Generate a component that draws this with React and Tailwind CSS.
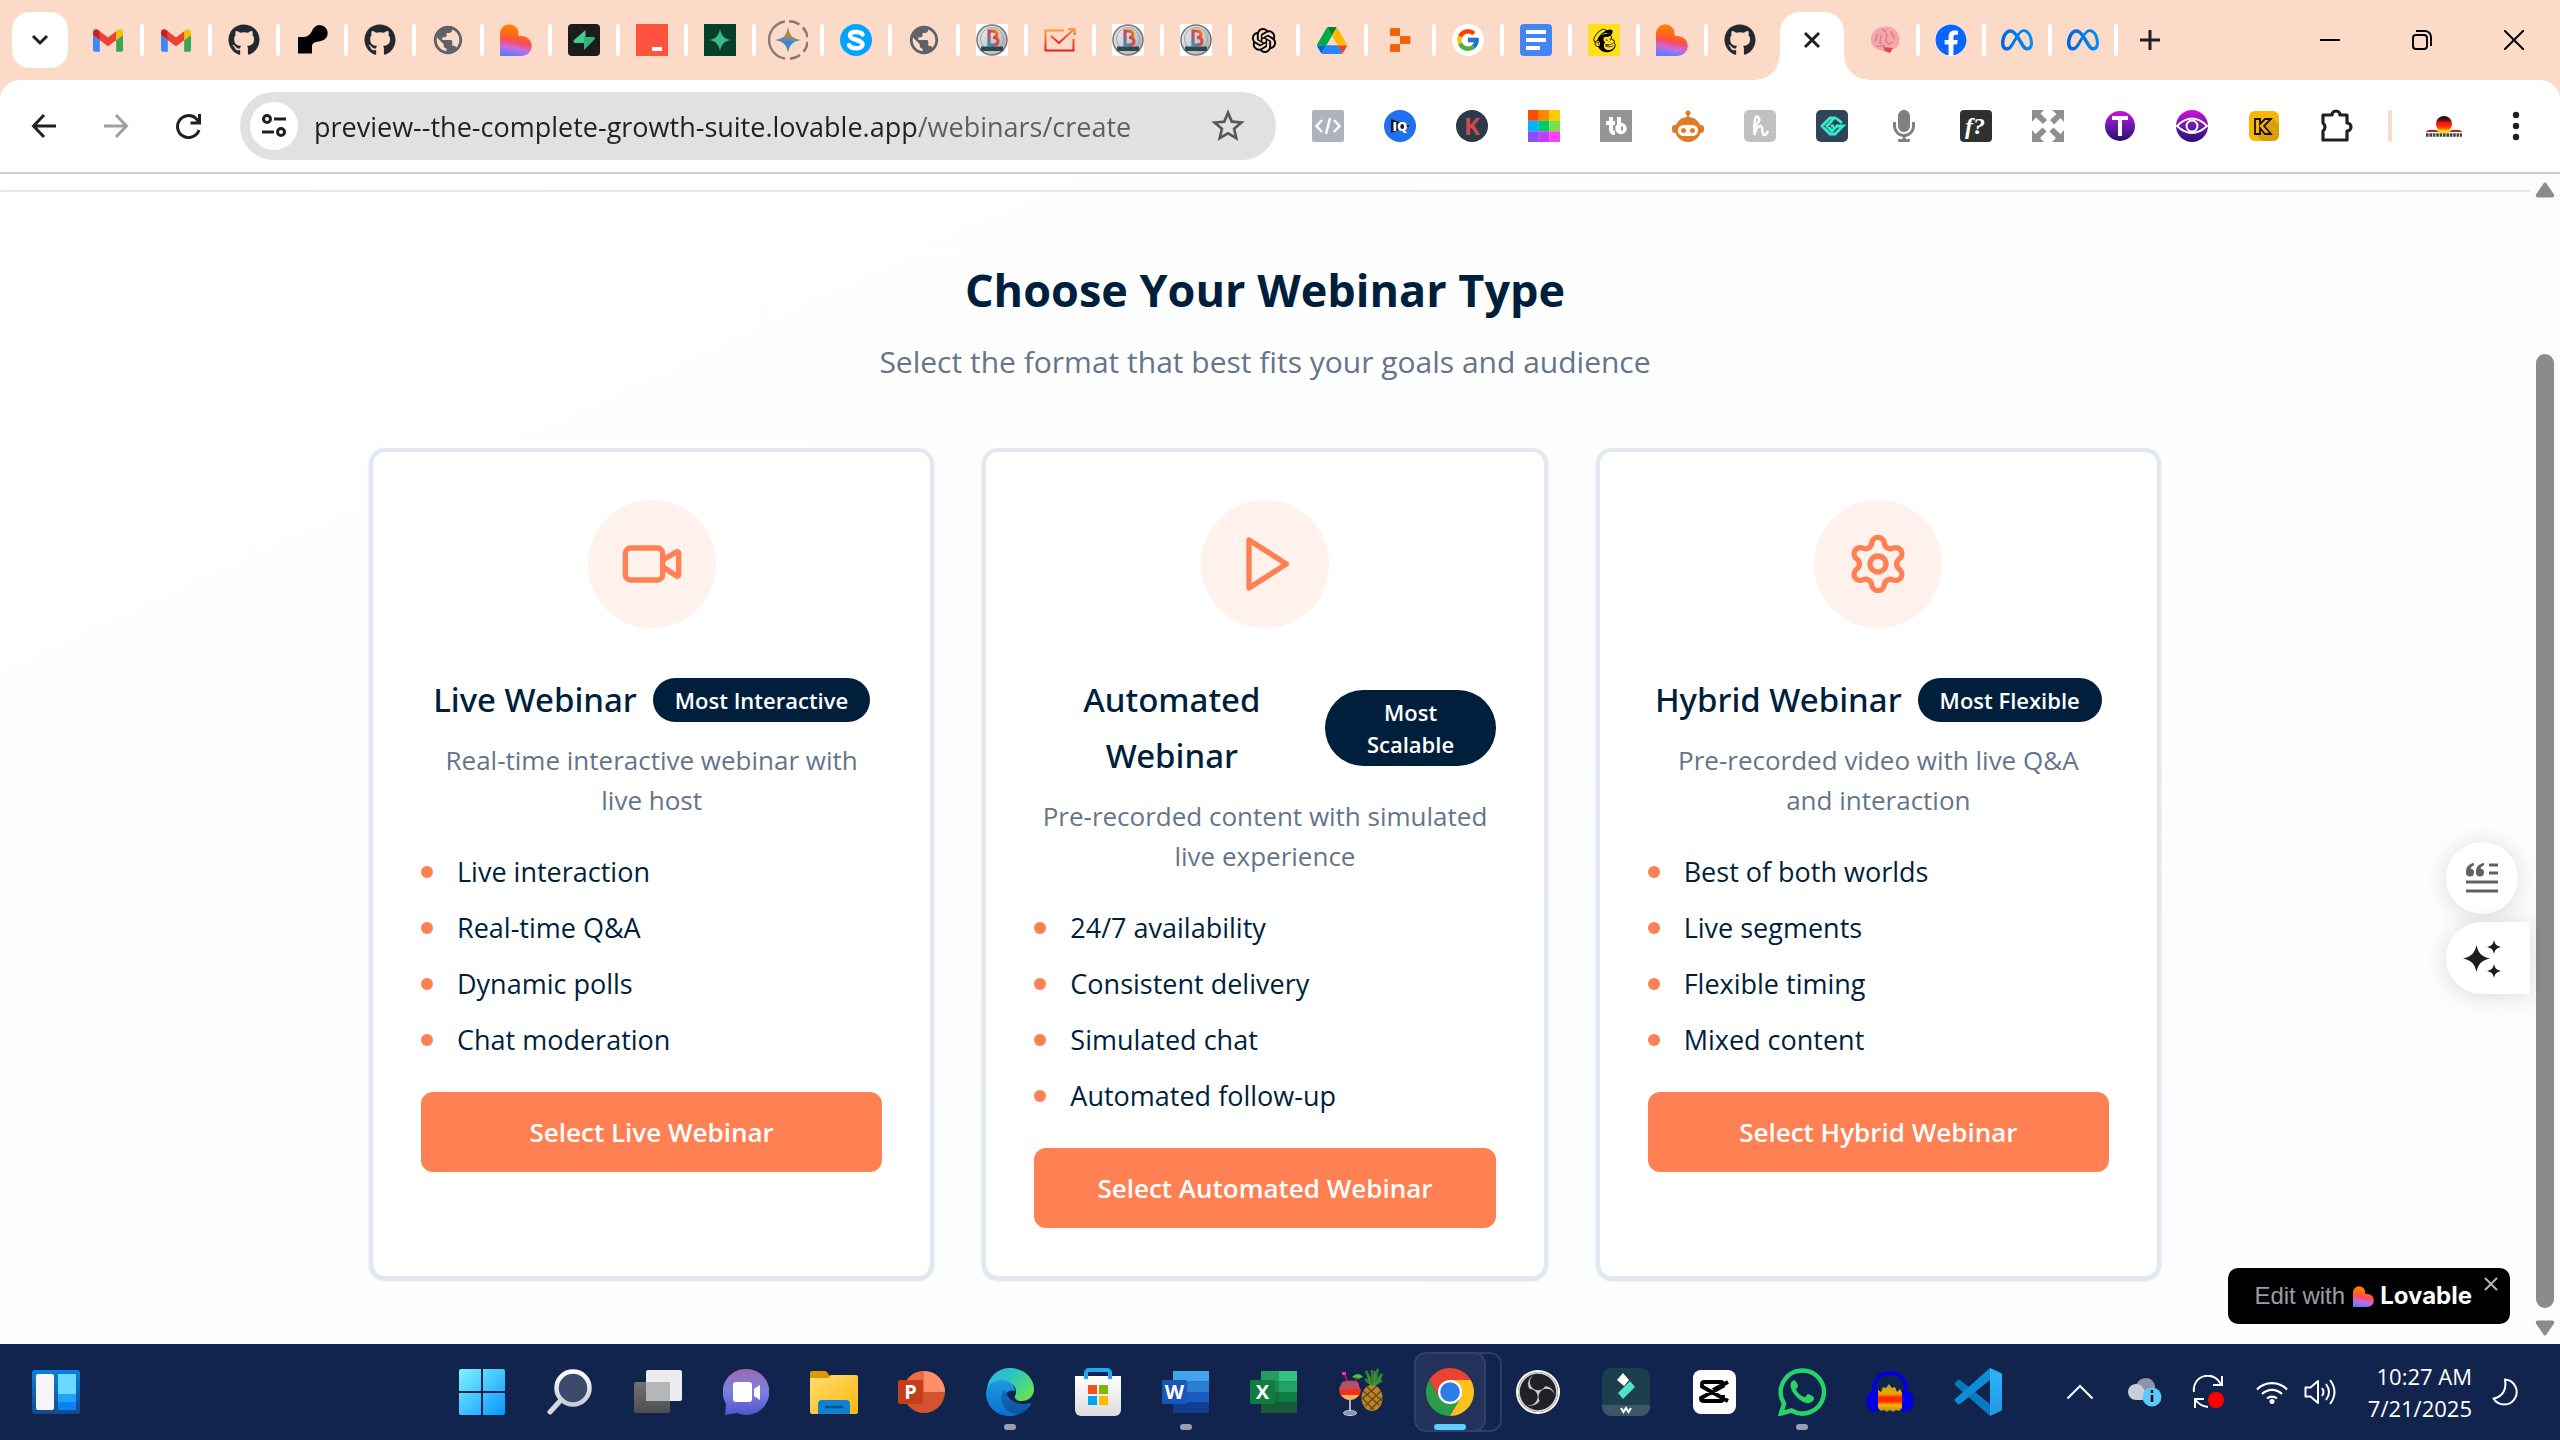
import React from "react";
import { Video, Settings } from "lucide-react";
import { FaGithub, FaFacebook, FaMailchimp, FaMicrophone } from "react-icons/fa";
import { FaMeta } from "react-icons/fa6";
import { FcGoogle } from "react-icons/fc";
import { MdPublic, MdStarOutline } from "react-icons/md";
import { AiOutlineOpenAI } from "react-icons/ai";
import { SiObsstudio } from "react-icons/si";

/* ---------- shared gradients ---------- */
function Gradients() {
  const g = (id, stops, v = [0, 0, 0, 1]) => (
    <linearGradient id={id} x1={v[0]} y1={v[1]} x2={v[2]} y2={v[3]}>
      {stops.map(([o, c]) => <stop key={o} offset={o} stopColor={c} />)}
    </linearGradient>
  );
  return (
    <svg width="0" height="0" className="absolute" aria-hidden="true">
      <defs>
        {g("heart", [[0, "#ff8a00"], [0.35, "#ff6a10"], [0.55, "#ff4a58"], [0.75, "#c86ae0"], [1, "#5a7dff"]], [0.6, 0, 0.4, 1])}
        {g("win", [[0, "#7ff3ff"], [1, "#0a95ff"]], [0, 0, 1, 1])}
        {g("widget", [[0, "#0a7fe0"], [1, "#144a8c"]])}
        {g("folder", [[0, "#ffdc70"], [1, "#fbb90e"]], [0, 0, 1, 1])}
        {g("chat", [[0, "#9a6bb5"], [0.5, "#7a80e0"], [1, "#5254c8"]])}
        {g("edgeA", [[0, "#2fb0f5"], [0.5, "#2cc6c0"], [1, "#62e05a"]], [0, 0, 1, 0.6])}
        {g("edgeB", [[0, "#1b9de0"], [1, "#0a6ed0"]])}
        {g("edgeC", [[0, "#0f6ab8"], [1, "#1054a0"]])}
        {g("purple", [[0, "#d010d8"], [0.5, "#6a1ab0"], [1, "#2a0f6a"]])}
        {g("meta", [[0, "#0064e0"], [1, "#0090fb"]], [0, 0, 1, 0])}
        {g("check", [[0, "#ff9a3c"], [1, "#f01c1c"]])}
        {g("bag", [[0, "#ffffff"], [1, "#dcdcde"]])}
        {g("lens", [[0, "#ffffff"], [1, "#c8ccd4"]])}
        {g("gray", [[0, "#707274"], [1, "#4c4e50"]])}
        {g("wave", [[0, "#c9a21a"], [0.35, "#e8a800"], [0.48, "#ff2a00"], [0.62, "#ff2a00"], [0.75, "#ffb400"], [1, "#a88a20"]])}
        {g("gem", [[0, "#e8453c"], [0.35, "#9a9a50"], [0.6, "#3b7df0"], [1, "#34a853"]], [0.5, 0, 0.4, 1])}
        {g("flag", [[0, "#111111"], [0.25, "#501010"], [0.4, "#f01010"], [0.7, "#ff3a00"], [1, "#ffe000"]])}
        {g("disc", [[0, "#f4f4f6"], [1, "#a8aab0"]], [0, 0, 1, 1])}
        {g("bletter", [[0, "#e0a020"], [0.3, "#e0502c"], [0.6, "#c04a70"], [1, "#2a9ab0"]], [1, 0, 0, 1])}
        {g("vs", [[0, "#2fb4f8"], [1, "#1f98e8"]])}
      </defs>
    </svg>
  );
}

const Svg = ({ w = 32, h = 32, vb = "0 0 32 32", children }) => (
  <svg width={w} height={h} viewBox={vb} fill="none" aria-hidden="true" className="shrink-0">{children}</svg>
);

/* ---------- favicons ---------- */
const Gmail = () => (
  <Svg w={30} h={23} vb="52 42 88 66">
    <path fill="#4285f4" d="M58 108h14V74L52 59v43c0 3.32 2.69 6 6 6" />
    <path fill="#34a853" d="M120 108h14c3.32 0 6-2.69 6-6V59l-20 15" />
    <path fill="#fbbc04" d="M120 48v26l20-15v-8c0-7.42-8.47-11.65-14.4-7.2" />
    <path fill="#ea4335" d="M72 74V48l24 18 24-18v26L96 92" />
    <path fill="#c5221f" d="M52 51v8l20 15V48l-5.6-4.2c-5.94-4.45-14.4-.22-14.4 7.2" />
  </Svg>
);
const Github = () => <FaGithub className="size-8 text-[#24292f]" />;
const Globe = () => <MdPublic className="size-[34px] text-[#5f6368]" />;
const Heart = ({ size = 32 }) => (
  <Svg w={size} h={size}>
    <path fill="url(#heart)" d="M0 32V9.5a9.3 9.3 0 0 1 18.6 0V12h3.2a10 10 0 0 1 0 20z" />
  </Svg>
);
const BlackMark = () => (
  <Svg>
    <path fill="#000" d="M2 29.500V13h5c4 0 7-2 9-6a8 8 0 1 1 9 10c-6 1-9 2-9 5v7.500z" />
  </Svg>
);
const Bolt = () => (
  <Svg>
    <rect width="32" height="32" rx="4" fill="#1c1c1c" />
    <path fill="#3ecf8e" d="M17.500 6v13H7.500c-2 0-2.600-1.500-1.500-3z" />
    <path fill="#34b27b" d="M16 26V13h9.500c1.500 0 1.800 1.500.8 2.800z" />
  </Svg>
);
const RedSquare = () => (
  <Svg><rect width="32" height="32" fill="#ff5340" /><rect x="16" y="23" width="10" height="4" fill="#fff" /></Svg>
);
const GreenStar = () => (
  <Svg>
    <rect width="32" height="32" fill="#063f2c" />
    <path fill="#3cb98a" d="M16 5c1.500 7 4 9.500 11 11-7 1.500-9.500 4-11 11-1.500-7-4-9.500-11-11 7-1.500 9.500-4 11-11z" />
  </Svg>
);
const Gemini = () => (
  <Svg w={40} h={40} vb="0 0 40 40">
    <path d="M17 38.500A18.700 18.700 0 0 1 17 1.500" stroke="#8d7a76" strokeWidth="2.500" />
    <path d="M21 1.300A18.700 18.700 0 0 1 21 38.700" stroke="#8d7a76" strokeWidth="2.500" strokeDasharray="11 4.500" />
    <path fill="url(#gem)" d="M20 7c1.500 8.500 4.500 11.500 13 13-8.500 1.500-11.500 4.500-13 13-1.500-8.500-4.500-11.500-13-13 8.500-1.500 11.500-4.500 13-13z" />
  </Svg>
);
const Skype = () => (
  <Svg>
    <circle cx="16" cy="16" r="16" fill="#00a3ff" />
    <path d="M22.500 10.500C21 7.500 10 6.500 10 11.500c0 5 12.500 3.500 12.500 9 0 5-11.500 5-13.500.5" stroke="#fff" strokeWidth="4.500" strokeLinecap="round" />
  </Svg>
);
const BDisc = () => (
  <Svg>
    <rect width="32" height="32" fill="#fff" />
    <circle cx="16" cy="16" r="15" fill="url(#disc)" stroke="#777" strokeWidth="1.500" />
    <circle cx="16" cy="15" r="11.500" stroke="#9c9ea4" />
    <path d="M13 21V7h4q4 0 4 3.300T17 13.500q5 0 5 3.700T17 21h-4z" stroke="url(#bletter)" strokeWidth="3.200" />
    <rect x="5" y="22.500" width="22" height="4.500" fill="#2c4654" />
  </Svg>
);
const CheckBox = () => (
  <Svg>
    <path d="M20 6.500H1.500v20h28V15" stroke="url(#check)" strokeWidth="2" />
    <path d="M7 12l8 7L30 5M24 5h6.500v6" stroke="url(#check)" strokeWidth="2" />
  </Svg>
);
const Drive = () => (
  <Svg w={30} h={27} vb="0 0 87.3 78">
    <path d="m6.600 66.850 3.850 6.650c.8 1.400 1.950 2.500 3.300 3.300l13.750-23.800h-27.500c0 1.550.4 3.100 1.200 4.500z" fill="#0066da" />
    <path d="m43.650 25-13.750-23.800c-1.350.8-2.500 1.900-3.300 3.300l-25.400 44a9.060 9.060 0 0 0-1.200 4.500h27.500z" fill="#00ac47" />
    <path d="m73.550 76.800c1.350-.8 2.500-1.900 3.300-3.300l1.600-2.750 7.650-13.250c.8-1.400 1.200-2.950 1.200-4.500h-27.500l5.850 11.500z" fill="#ea4335" />
    <path d="m43.650 25 13.750-23.800c-1.350-.8-2.900-1.200-4.500-1.200h-18.500c-1.600 0-3.150.45-4.500 1.200z" fill="#00832d" />
    <path d="m59.800 53h-32.300l-13.750 23.800c1.350.8 2.900 1.200 4.500 1.200h50.800c1.600 0 3.150-.45 4.500-1.200z" fill="#2684fc" />
    <path d="m73.400 26.500-12.700-22c-.8-1.400-1.950-2.500-3.300-3.300l-13.750 23.800 16.150 28h27.450c0-1.550-.4-3.100-1.200-4.500z" fill="#ffba00" />
  </Svg>
);
const Blocks = () => (
  <Svg><path fill="#f26207" d="M6 5.500a1.500 1.500 0 0 1 1.500-1.500H15a1 1 0 0 1 1 1v7H7.500A1.500 1.500 0 0 1 6 10.500zM16 12h9a1.500 1.500 0 0 1 1.500 1.500v5A1.500 1.500 0 0 1 25 20h-9zM6 21.500A1.500 1.500 0 0 1 7.500 20H16v7a1 1 0 0 1-1 1H7.500A1.500 1.500 0 0 1 6 26.500z" /></Svg>
);
const Google = () => (
  <span className="flex size-8 items-center justify-center rounded-full bg-white"><FcGoogle className="size-[26px]" /></span>
);
const Docs = () => (
  <Svg><rect width="32" height="32" rx="4" fill="#4285f4" /><path stroke="#fff" strokeWidth="4" d="M6 8h20M6 16h20M6 24h14" /></Svg>
);
const Mailchimp = () => (
  <span className="flex size-8 items-center justify-center bg-[#ffe01b]"><FaMailchimp className="size-[27px] text-black" /></span>
);
const Brain = () => (
  <Svg>
    <path fill="#f4a6ab" d="M3 20C0 14 3 6 11 3.500c8-2.500 15 0 18 6 3 7 1 13-3 15l-4 .5-3 4-5-2C9 26 5 24 3 20z" />
    <path fill="#d84a55" d="M14 23l10 1-3 5-5-2z" />
    <path stroke="#e07a84" strokeWidth="1.500" d="M6 17c2-3 1-5 3-7M11 20c1-4-1-6 2-9M16 9c3 1 2 4 1 6s1 4 3 5M22 7c0 4 4 3 3 8M8 22c3 1 5-1 8 0M24 18c-2 0-3 2-5 2M13 5c1 2 3 1 4 3" />
  </Svg>
);
const Facebook = () => (
  <span className="flex size-8 items-center justify-center rounded-full bg-white"><FaFacebook className="size-8 text-[#0866ff]" /></span>
);
const Meta = () => <FaMeta className="size-8" style={{ fill: "url(#meta)" }} />;
const ChatGpt = () => <AiOutlineOpenAI className="size-8 text-black" />;

const leftTabs = [
  ["Inbox", Gmail], ["Mail", Gmail], ["Repository", Github], ["Studio", BlackMark], ["Repository", Github],
  ["Web page", Globe], ["Lovable", Heart], ["Database", Bolt], ["Notes", RedSquare], ["Spark", GreenStar],
  ["Gemini", Gemini], ["Skype", Skype], ["Web page", Globe], ["Site", BDisc], ["Tasks", CheckBox],
  ["Site", BDisc], ["Site", BDisc], ["ChatGPT", ChatGpt], ["Drive", Drive], ["Replit", Blocks],
  ["Google", Google], ["Docs", Docs], ["Mailchimp", Mailchimp], ["Lovable", Heart], ["Repository", Github],
];
const rightTabs = [["Brain", Brain], ["Facebook", Facebook], ["Meta", Meta], ["Meta", Meta]];

function Tab({ label, Icon, last, width }) {
  return (
    <button aria-label={label} className={`mb-3 flex h-14 shrink-0 items-center ${width}`}>
      <span className="flex flex-1 items-center justify-center"><Icon /></span>
      <span className={`h-8 w-1 rounded-sm ${last ? "" : "bg-white"}`} />
    </button>
  );
}

function TabStrip() {
  return (
    <header className="flex h-20 items-end bg-[#fcdac8] pl-3">
      <button aria-label="Search tabs" className="mb-3 flex h-14 w-14 shrink-0 items-center justify-center rounded-[18px] bg-white">
        <Svg w={20} h={20} vb="0 0 20 20"><path d="M3 6l7 7 7-7" stroke="#1f2023" strokeWidth="3" /></Svg>
      </button>
      <nav aria-label="Tabs" className="ml-2 flex">
        {leftTabs.map(([label, Icon], i) => (
          <Tab key={i} label={label} Icon={Icon} last={i === leftTabs.length - 1} width="w-[68px]" />
        ))}
        <div className="relative mr-[10px] ml-1 flex h-17 w-16 items-center justify-center rounded-t-[20px] bg-white pb-3">
          <button aria-label="Close tab">
            <Svg w={20} h={20} vb="0 0 20 20"><path d="M3 3l14 14M17 3L3 17" stroke="#1f2023" strokeWidth="3" /></Svg>
          </button>
          <span className="absolute bottom-0 -left-6 size-6 bg-[radial-gradient(circle_at_0_0,transparent_23px,white_24px)]" />
          <span className="absolute -right-6 bottom-0 size-6 bg-[radial-gradient(circle_at_100%_0,transparent_23px,white_24px)]" />
        </div>
        {rightTabs.map(([label, Icon], i) => (
          <Tab key={i} label={label} Icon={Icon} width="w-[66px]" />
        ))}
      </nav>
      <button aria-label="New tab" className="mb-3 flex h-14 w-16 items-center justify-center">
        <Svg w={22} h={22} vb="0 0 22 22"><path d="M11 1v20M1 11h20" stroke="#1f2023" strokeWidth="3" /></Svg>
      </button>
      <div className="mb-3 ml-auto flex h-14 text-black">
        <button aria-label="Minimize" className="flex w-[92px] items-center justify-center">
          <Svg w={20} h={20} vb="0 0 20 20"><path d="M0 10h20" stroke="#000" strokeWidth="2" /></Svg>
        </button>
        <button aria-label="Restore" className="flex w-[92px] items-center justify-center">
          <Svg w={20} h={20} vb="0 0 20 20">
            <rect x="1" y="5" width="14" height="14" rx="3" stroke="#000" strokeWidth="2" />
            <path d="M4 1h9a6 6 0 0 1 6 6v9" stroke="#000" strokeWidth="2" />
          </Svg>
        </button>
        <button aria-label="Close window" className="flex w-[92px] items-center justify-center">
          <Svg w={20} h={20} vb="0 0 20 20"><path d="M0 0l20 20M20 0L0 20" stroke="#000" strokeWidth="2" /></Svg>
        </button>
      </div>
    </header>
  );
}

/* ---------- toolbar ---------- */
const letter = "font-['Open_Sans',sans-serif]";
const extensions = [
  ["Code snippets", <Svg><rect width="32" height="32" rx="2" fill="#aeb4be" /><path d="M10 10l-5.500 6 5.500 6M22 10l5.500 6-5.500 6M18 8l-4 16" stroke="#fff" strokeWidth="2.500" /></Svg>],
  ["IQ", <Svg><circle cx="16" cy="16" r="16" fill="#2070f0" /><path fill="#111" d="M7 9l19 7-19 7z" /><text x="16" y="21" textAnchor="middle" fontSize="13" fontWeight="800" fill="#fff" className={letter}>IQ</text></Svg>],
  ["Keywords", <Svg><circle cx="16" cy="16" r="16" fill="#2c3b49" /><text x="16" y="25" textAnchor="middle" fontSize="24" fontWeight="700" fill="#d0494c" className={letter}>K</text></Svg>],
  ["Color picker", <Svg>
    {["#ff4d00", "#ff8a00", "#ffcc00", "#00b4ff", "#00cc66", "#7be04a", "#8a4dff", "#c93cff", "#ff40ff"].map((c, i) => (
      <rect key={c} x={(i % 3) * 10.67} y={Math.floor(i / 3) * 10.67} width="10.8" height="10.8" fill={c} />
    ))}
  </Svg>],
  ["TubeBuddy", <Svg><rect width="32" height="32" fill="#959595" /><path d="M11 7v12q0 4 4 4M6 13h9M19 7v16" stroke="#fff" strokeWidth="4" /><circle cx="21" cy="18.500" r="4" stroke="#fff" strokeWidth="3.500" /></Svg>],
  ["Robot", <Svg>
    <circle cx="16" cy="3" r="2.500" fill="#e27a26" /><path d="M16 3v6" stroke="#e27a26" strokeWidth="2" />
    <ellipse cx="16" cy="19.500" rx="13" ry="12.500" fill="#e27a26" /><rect x="0" y="15" width="32" height="8" rx="3" fill="#e27a26" />
    <rect x="6" y="15" width="20" height="11" rx="5.500" fill="#fff" /><circle cx="11.500" cy="20.500" r="2.500" fill="#e27a26" /><circle cx="20.500" cy="20.500" r="2.500" fill="#e27a26" />
  </Svg>],
  ["Honey", <Svg><rect width="32" height="32" rx="5" fill="#c1c1c1" /><path d="M9 17c5-2 8-8 5-10s-4 4-3.500 18c1-6 3-9 6-9s1 9 3.500 9 3-2 4-4" stroke="#fff" strokeWidth="2.500" /></Svg>],
  ["Layers", <Svg><rect width="32" height="32" rx="5" fill="#2f445a" /><path d="M20 8h-6L6 16l8 8h5l8-8h-7M20 8l6 5M14 13l-3 3 5 5 5-5M14 13l3-4M15 16h3" stroke="#38ecc8" strokeWidth="2.800" /></Svg>],
  ["Voice", <FaMicrophone className="size-8 text-[#808080]" />],
  ["Font finder", <Svg><rect width="32" height="32" rx="4" fill="#303030" /><text x="15" y="24" textAnchor="middle" fontSize="24" fontStyle="italic" fontWeight="700" fill="#fff" className="font-['Liberation_Serif',serif]">f?</text></Svg>],
  ["Full screen", <Svg><path fill="#8f8f8f" d="M0 0h12L8.500 3.500 15 10l-4 4-7-6.500L0 12zM32 0v12l-3.500-4-6.500 6.500-4-4.500 6.500-6L20 0zM0 32V20l3.500 4 7-6.500 4 4L8 28l4 4zM32 32H20l4-4-6.500-6.500 4-4 7 6.500 3.500-4z" /></Svg>],
  ["Text tool", <Svg><circle cx="16" cy="16" r="15" fill="url(#purple)" /><path d="M8 8h16M16 8v18" stroke="#fff" strokeWidth="4" /></Svg>],
  ["Preview", <Svg><circle cx="16" cy="16" r="16" fill="url(#purple)" /><path d="M1 16q15-15 30 0-15 14-30 0z" stroke="#fff" strokeWidth="2" /><circle cx="16" cy="16" r="5.500" stroke="#fff" strokeWidth="2" /></Svg>],
  ["Keepa", <Svg><rect x="1" y="1" width="30" height="30" rx="6" fill="#fbb604" /><path fill="#dca004" d="M8 25L26 9l5 5v11a6 6 0 0 1-6 6H14z" /><path fill="#fbb604" d="M7 9h5v5l5-5h6l-7 7 7 8h-6l-5-6v6H7z" stroke="#111" strokeWidth="1.800" /></Svg>],
];

function Toolbar() {
  return (
    <div className="bg-[#fcdac8]">
      <div className="flex h-23 items-center rounded-t-[20px] bg-white pr-2">
        <button aria-label="Back" className="flex h-12 w-[72px] items-center justify-center pl-4">
          <Svg w={26} h={26} vb="0 0 26 26"><path d="M25 13H3M13 2L2.500 13 13 24" stroke="#1f2023" strokeWidth="3" /></Svg>
        </button>
        <button aria-label="Forward" className="flex h-12 w-[72px] items-center justify-center pl-4">
          <Svg w={26} h={26} vb="0 0 26 26"><path d="M1 13h22M13 2l10.500 11L13 24" stroke="#a0a0a0" strokeWidth="3" /></Svg>
        </button>
        <button aria-label="Reload" className="flex h-12 w-[72px] items-center justify-center pl-4">
          <Svg w={26} h={26} vb="0 0 26 26"><path d="M24 17A11 11 0 1 1 21 5.500L24 9M24.500 1v9h-9" stroke="#1f2023" strokeWidth="3" /></Svg>
        </button>
        <div className="ml-6 flex h-17 min-w-0 flex-1 items-center rounded-full bg-[#e1e1e1] pr-7 pl-[10px]">
          <button aria-label="View site information" className="flex size-12 shrink-0 items-center justify-center rounded-full bg-white">
            <Svg w={26} h={24} vb="0 0 26 24"><circle cx="6" cy="5" r="3.500" stroke="#1f2023" strokeWidth="3" /><path d="M13 5h12M1 18h12" stroke="#1f2023" strokeWidth="3" /><circle cx="20" cy="18" r="3.500" stroke="#1f2023" strokeWidth="3" /></Svg>
          </button>
          <input
            aria-label="Address"
            defaultValue="preview--the-complete-growth-suite.lovable.app/webinars/create"
            className="ml-4 h-12 min-w-0 flex-1 bg-[linear-gradient(90deg,#1f2023_604px,#5c5d60_604px)] bg-clip-text font-['Open_Sans',sans-serif] text-[27px] text-transparent caret-black outline-none"
          />
          <button aria-label="Bookmark this tab"><MdStarOutline className="size-10 text-[#55575b]" /></button>
        </div>
        <div className="ml-4 flex">
          {extensions.map(([label, icon]) => (
            <button key={label} aria-label={label} className="flex h-12 w-[72px] items-center justify-center">{icon}</button>
          ))}
          <button aria-label="Extensions" className="flex h-12 w-[72px] items-center justify-center">
            <Svg w={36} h={36} vb="0 0 36 36"><path d="M5 7h9a4 4 0 0 1 8 0h7v8a4 4 0 0 1 0 8v9H5v-9a5 5 0 0 0 0-8z" stroke="#1f2023" strokeWidth="3.200" strokeLinejoin="round" /></Svg>
          </button>
        </div>
        <span className="ml-4 h-8 w-1 rounded-sm bg-[#fcdac8]" />
        <button aria-label="Profile" className="ml-4 flex h-12 w-[72px] items-center justify-center">
          <Svg w={38} h={34} vb="0 0 38 34">
            <circle cx="19" cy="15" r="8" fill="url(#flag)" />
            <path fill="#b82a10" d="M1 23q1-3 10-2l4 2h8l4-2q9-1 10 2z" />
            <path fill="#ffe000" d="M12 21h14l-3 3h-8z" />
            <path stroke="#444" strokeWidth="3.500" strokeDasharray="2.600 .8" d="M1 26h36" />
          </Svg>
        </button>
        <button aria-label="Menu" className="flex h-12 w-[72px] items-center justify-center">
          <Svg w={8} h={30} vb="0 0 8 30"><circle cx="4" cy="4" r="3.200" fill="#1f2023" /><circle cx="4" cy="15" r="3.200" fill="#1f2023" /><circle cx="4" cy="26" r="3.200" fill="#1f2023" /></Svg>
        </button>
      </div>
    </div>
  );
}

/* ---------- page ---------- */
const PlayIcon = ({ size, className }) => (
  <svg width={size} height={size} viewBox="0 0 24 24" fill="none" stroke="currentColor" strokeWidth="2" strokeLinecap="round" strokeLinejoin="round" className={className} aria-hidden="true">
    <polygon points="6 3 20 12 6 21 6 3" />
  </svg>
);

const webinarTypes = [
  {
    title: "Live Webinar", badge: "Most Interactive", Icon: Video,
    text: "Real-time interactive webinar with live host",
    features: ["Live interaction", "Real-time Q&A", "Dynamic polls", "Chat moderation"],
  },
  {
    title: "Automated Webinar", badge: "Most Scalable", Icon: PlayIcon,
    text: "Pre-recorded content with simulated live experience",
    features: ["24/7 availability", "Consistent delivery", "Simulated chat", "Automated follow-up"],
  },
  {
    title: "Hybrid Webinar", badge: "Most Flexible", Icon: Settings,
    text: "Pre-recorded video with live Q&A and interaction",
    features: ["Best of both worlds", "Live segments", "Flexible timing", "Mixed content"],
  },
];

function WebinarCard({ title, badge, Icon, text, features }) {
  return (
    <article className="rounded-2xl border-4 border-[#e1e8f1] bg-white p-12 shadow-sm">
      <div className="mx-auto mb-11 flex size-32 items-center justify-center rounded-full bg-[#fff1ec]">
        <Icon size={64} className="text-[#ff8052]" />
      </div>
      <div className="flex items-center justify-center gap-4 text-center">
        <h3 className="font-['Noto_Sans',sans-serif] text-[33px] leading-14 font-medium">{title}</h3>
        <span className="rounded-full bg-[#001f3d] px-[22px] py-[6px] text-[22px] leading-8 font-semibold text-white">{badge}</span>
      </div>
      <p className="mx-auto mt-3 max-w-[450px] text-center text-[26px] leading-10 text-[#64748b]">{text}</p>
      <ul className="mt-8 flex flex-col gap-4">
        {features.map((f) => (
          <li key={f} className="flex items-center gap-6 text-[27px] leading-10">
            <span className="size-3 rounded-full bg-[#ff8052]" />
            {f}
          </li>
        ))}
      </ul>
      <button className="mt-8 h-20 w-full rounded-xl bg-[#ff8052] text-[26px] font-semibold text-white">Select {title}</button>
    </article>
  );
}

function FloatingTools() {
  return (
    <>
      <div className="absolute top-[668px] right-0 flex w-[84px] flex-col gap-2">
        <button aria-label="Summarize" className="flex size-[72px] items-center justify-center rounded-full bg-white shadow-[0_2px_24px_rgba(0,0,0,0.14)]">
          <Svg w={32} h={30} vb="0 0 32 30">
            <path fill="#5f6164" d="M8 0v2.500C6 3 5 4 4.500 5.500A4 4 0 1 1 0 9C0 4 3 .5 8 0zM18 0v2.500C16 3 15 4 14.500 5.500A4 4 0 1 1 10 9c0-5 3-8.500 8-9z" />
            <path stroke="#5f6164" strokeWidth="3" d="M23 2h9M23 10h9M0 19h32M0 28h32" />
          </Svg>
        </button>
        <button aria-label="Assistant" className="flex h-[72px] w-full items-center rounded-l-full bg-white pl-4 shadow-[0_2px_24px_rgba(0,0,0,0.14)]">
          <Svg w={40} h={40} vb="0 0 40 40">
            <path fill="#1d1d1f" d="M14.500 7c2 8.500 5 11.500 13.500 13.500-8.500 2-11.500 5-13.500 13.500C12.500 25.500 9.500 22.500 1 20.500 9.500 18.500 12.500 15.500 14.500 7z" />
            <path fill="#1d1d1f" d="M32 2c1 4.500 2.500 6 7 7-4.500 1-6 2.500-7 7-1-4.500-2.500-6-7-7 4.500-1 6-2.500 7-7zM32 26c1 4.500 2.500 6 7 7-4.500 1-6 2.500-7 7-1-4.500-2.500-6-7-7 4.500-1 6-2.500 7-7z" />
          </Svg>
        </button>
      </div>
      <div className="absolute right-5 bottom-5 flex h-14 items-start rounded-[10px] bg-black pr-3 pl-[26px]">
        <a href="#edit" className="flex h-14 items-center gap-[6px]">
          <span className="mr-[2px] font-['Liberation_Sans',sans-serif] text-[24px] text-[#9c9ca6]">Edit with</span>
          <Heart size={21} />
          <span className="font-['Inter',sans-serif] text-[24px] font-bold text-white">Lovable</span>
        </a>
        <button aria-label="Dismiss" className="mt-[9px] ml-3">
          <Svg w={14} h={14} vb="0 0 14 14"><path d="M1 1l12 12M13 1L1 13" stroke="#b4b4bc" strokeWidth="2" /></Svg>
        </button>
      </div>
    </>
  );
}

function Scrollbar() {
  return (
    <div className="flex w-[30px] shrink-0 flex-col items-center bg-[#fcfcfc] py-2" aria-hidden="true">
      <Svg w={20} h={16} vb="0 0 20 16"><path fill="#8b8b8b" d="M8.500 1.500q1.500-2 3 0l7.500 11q1 3-2 3H3q-3 0-2-3z" /></Svg>
      <span className="mt-[156px] w-[18px] flex-1 rounded-full bg-[#8b8b8b]" />
      <span className="mt-3"><Svg w={20} h={16} vb="0 0 20 16"><path fill="#8b8b8b" d="M8.500 14.500q1.500 2 3 0l7.500-11q1-3-2-3H3q-3 0-2 3z" /></Svg></span>
    </div>
  );
}

function Page() {
  return (
    <div className="flex flex-1 border-t-2 border-[#cccccc]">
      <div className="relative flex-1 bg-gradient-to-br from-white via-[#fefefe] to-[#fbfdfe] pb-16">
        <div className="h-[18px] border-b-2 border-[#e1e7f1]" />
        <main className="mx-auto max-w-[1792px] pt-[70px] text-[#001f3d]">
          <h2 className="text-center text-[45px] leading-14 font-bold">Choose Your Webinar Type</h2>
          <p className="mt-5 text-center text-[30px] leading-12 text-[#64748b]">Select the format that best fits your goals and audience</p>
          <div className="mt-[62px] grid grid-cols-3 gap-12">
            {webinarTypes.map((t) => <WebinarCard key={t.title} {...t} />)}
          </div>
        </main>
        <FloatingTools />
      </div>
      <Scrollbar />
    </div>
  );
}

/* ---------- taskbar ---------- */
const Office = ({ ch, back, tile, round }) => (
  <Svg w={48} h={48} vb="0 0 48 48">
    {round ? (
      <><circle cx="26" cy="24" r="21" fill={back[3]} /><path fill={back[0]} d="M26 3a21 21 0 0 1 21 21H26z" /><path fill={back[1]} d="M26 3v21H5A21 21 0 0 1 26 3z" /></>
    ) : (
      <>
        {back.map((c, i) => <rect key={c} x="11" y={3 + i * 10.5} width="36" height="10.600" fill={c} />)}
        {ch === "X" && <path fill="#185c37" opacity=".4" d="M11 3h18v42H11z" />}
      </>
    )}
    <rect x="0" y="12" width="25" height="24" rx="2" fill={tile} />
    <text x="12.500" y="31" textAnchor="middle" fontSize="20" fontWeight="700" fill="#fff" className={letter}>{ch}</text>
  </Svg>
);

const apps = [
  ["Start", <Svg w={46} h={46} vb="0 0 46 46"><path fill="url(#win)" d="M2 0h20v22H0V2a2 2 0 0 1 2-2zM24 0h20a2 2 0 0 1 2 2v20H24zM0 24h22v22H2a2 2 0 0 1-2-2zM24 24h22v20a2 2 0 0 1-2 2H24z" /></Svg>],
  ["Search", <Svg w={46} h={46} vb="0 0 46 46"><path d="M14 31L3 43" stroke="#d5d8de" strokeWidth="5" strokeLinecap="round" /><circle cx="26" cy="19" r="16.500" fill="#3d4a6c" stroke="url(#lens)" strokeWidth="4.500" /></Svg>],
  ["Task view", <Svg w={48} h={46} vb="0 0 48 46"><rect x="12" y="1" width="36" height="31" rx="2" fill="#ececee" /><rect x="0" y="13" width="36" height="31" rx="2" fill="url(#gray)" /><path fill="#b4b6b8" d="M12 13h24v19H12z" /></Svg>],
  ["Chat", <Svg w={46} h={46} vb="0 0 46 46"><path fill="url(#chat)" d="M23 0a23 23 0 1 1-9 44L2 46l1-11A23 23 0 0 1 23 0z" /><rect x="10" y="13" width="19" height="20" rx="3" fill="#fff" /><path fill="#fff" d="M31 20l6-4v15l-6-4z" /></Svg>],
  ["File Explorer", <Svg w={48} h={44} vb="0 0 48 44"><path fill="#dc9a00" d="M0 3a2 2 0 0 1 2-2h14l4 5v6H0z" /><path fill="url(#folder)" d="M0 8h18l3-3h25a2 2 0 0 1 2 2v35a2 2 0 0 1-2 2H2a2 2 0 0 1-2-2z" /><path fill="#1080d0" d="M8 44V34a4 4 0 0 1 4-4h24a4 4 0 0 1 4 4v10z" /><path d="M15 37h18" stroke="#0a4f90" strokeWidth="2.500" /></Svg>],
  ["PowerPoint", <Office ch="P" round back={["#ff8f6b", "#ed6c47", "#d35230", "#d35230"]} tile="#c43e1c" />],
  ["Edge", <Svg w={48} h={48} vb="0 0 48 48">
    <path fill="url(#edgeA)" d="M1 20C3 8 12 0 24 0c14 0 24 10 24 21 0 8-6 12-12 12-5 0-8-2-7-5 3-6 0-13-9-13C11 15 4 20 1 26z" />
    <path fill="url(#edgeB)" d="M0 25c0-8 8-13 16-13 8 0 13 6 13 11-8-2-11 4-10 10 1 8 8 13 14 13-3 1.500-6 2-9 2C10 48 0 38 0 25z" />
    <path fill="url(#edgeC)" d="M19 22c-4 3-5 9-2 15 4 8 13 11 19 8 4-2 7-5 9-9 0-1-.5-1-1.500-1C34 38 22 34 19 22z" />
  </Svg>, "open"],
  ["Microsoft Store", <Svg w={46} h={48} vb="0 0 46 48"><path d="M11 12V5a3 3 0 0 1 3-3h18a3 3 0 0 1 3 3v7" stroke="#22a8f0" strokeWidth="4" /><path fill="url(#bag)" d="M0 8h46v34a6 6 0 0 1-6 6H6a6 6 0 0 1-6-6z" /><path fill="#f25022" d="M13 17h9v9h-9z" /><path fill="#7fba00" d="M24 17h9v9h-9z" /><path fill="#00a4ef" d="M13 28h9v9h-9z" /><path fill="#ffb900" d="M24 28h9v9h-9z" /><path d="M11 8v3M35 8v3" stroke="#22a8f0" strokeWidth="4" /></Svg>],
  ["Word", <Office ch="W" back={["#41a5ee", "#2b7cd3", "#185abd", "#103f91"]} tile="#1c56b8" />, "open"],
  ["Excel", <Office ch="X" back={["#33c481", "#21a366", "#107c41", "#185c37"]} tile="#107c41" />],
  ["Cocktail game", <Svg w={48} h={50} vb="0 0 48 50">
    <path stroke="#2f7a34" strokeWidth="3" d="M35 19L28 4M35 19l-1-16M35 19l5-17M35 19l9-12M35 19l9-6M35 19l-8-7" />
    <path stroke="#3f9a3c" strokeWidth="1.500" d="M36 18l1-14M33 18l-3-9M37 18l6-8" />
    <ellipse cx="34" cy="31" rx="10.500" ry="13" fill="#b8852a" /><path stroke="#6a4310" strokeWidth="1.200" d="M25 24l16 14M28 19l16 15M24 31l12 12M43 24L27 39M39 19L24 32M44 31L32 43" />
    <path fill="#ff2ab0" d="M4 5h4v3H4z" /><path fill="#3cd030" d="M14 10q6-6 11 0l-5 2z" /><path d="M7 8l3 10M19 10l-3 8" stroke="#c81860" strokeWidth="1.500" />
    <path fill="#b8506a" d="M4 15q8-3 16 0l2 7H1z" /><path fill="#f03018" d="M1 22h22q0 4-2 7H3q-2-3-2-7z" /><path fill="#ffb060" d="M3 28h18q-3 5-9 5t-9-5z" />
    <path d="M12 33v11" stroke="#aab4c6" strokeWidth="2" /><ellipse cx="12" cy="46" rx="6.500" ry="2.500" fill="#8892a6" stroke="#c9d0dc" />
  </Svg>],
  ["Chrome", <Svg w={48} h={48} vb="0 0 48 48"><path fill="#ea4335" d="M3.220 12A24 24 0 0 1 44.780 12H24L13.610 30z" /><path fill="#2d9c4a" d="M3.220 12A24 24 0 0 0 24 48L34.390 30H13.610z" /><path fill="#fdc11f" d="M44.780 12A24 24 0 0 1 24 48L34.390 30 24 12z" /><circle cx="24" cy="24" r="12" fill="#fff" /><circle cx="24" cy="24" r="9.800" fill="#2b7de9" /></Svg>, "active"],
  ["OBS Studio", <span className="flex size-11 items-center justify-center rounded-full bg-[#222126] ring-2 ring-white ring-inset"><SiObsstudio className="size-10 text-[#d0d0d4]" /></span>],
  ["Filmora", <Svg w={48} h={48} vb="0 0 48 48"><rect width="48" height="48" rx="9" fill="#1d3e4e" /><path fill="#3c5868" d="M0 37h48v2a9 9 0 0 1-9 9H9a9 9 0 0 1-9-9z" /><path fill="#fff" d="M21 5l6 7-5 6-7-6z" /><path fill="#50e3c2" d="M28 13l5 6-12 12-5-6z" /><path d="M19 40l2.500 4 2.500-4 2.500 4 2.500-4" stroke="#fff" strokeWidth="2" /></Svg>],
  ["CapCut", <Svg w={43} h={44} vb="0 0 43 44"><rect width="43" height="44" rx="8" fill="#fff" /><path d="M9 17v-3q0-2 2-2h17q2 0 2 3v1l-22 12v1q0 2 3 2h17q2 0 2-3v-3M35 12L20 20M35 31L8 16" stroke="#000" strokeWidth="3.800" /></Svg>],
  ["WhatsApp", <Svg w={48} h={48} vb="0 0 48 48"><path d="M24 2.500a21.500 21.500 0 1 1-10.500 40L3 45.500l3-10A21.500 21.500 0 0 1 24 2.500z" stroke="#25d366" strokeWidth="4.500" /><path fill="#25d366" d="M17 12.500c-1-.6-2.500 0-3.500 1.500-5 7 10 23 18 21 3-.8 5-3.500 4.500-5.500-1-1.500-5-3.500-6-3.500s-2.200 3.500-3.400 3.200C22 27.500 19 24 18 21.500c0-1 2.500-2.500 2-4s-2-4.500-3-5z" /></Svg>, "open"],
  ["Audacity", <Svg w={48} h={44} vb="0 0 48 44"><path d="M8 24V20C8 9 14 3 24 3s16 6 16 17v4" stroke="#0000e0" strokeWidth="4" /><path fill="url(#wave)" d="M12 20l3 2 2-5 3 1 3-4 3 4 3-1 2 5 3-3 2 4v15l-3 3-3-1-3 2-3-2-3 2-3-2-3 1-3-3z" /><path fill="#0000e0" d="M9 20h3v22H8q-8-2-8-11t9-11zM39 20h-3v22h4q8-2 8-11t-9-11z" /></Svg>],
  ["Visual Studio Code", <Svg w={48} h={48} vb="0 0 48 48"><path fill="#0a78c0" d="M1 17q-1-1 0-2l3-3q1-1 2 0l30 24v12z" /><path fill="#0e8cd8" d="M1 31q-1 1 0 2l3 3q1 1 2 0l30-24V0z" /><path fill="url(#vs)" d="M36 0l11 5q1 .5 1 2v34q0 1.500-1 2l-11 5z" /><path fill="#10244d" d="M35 14v20L22 24z" /></Svg>],
];

function AppButton({ label, icon, state }) {
  return (
    <button aria-label={label} className="relative flex h-24 w-[88px] shrink-0 items-center justify-center">
      {state === "active" && <span className="absolute top-2 -right-2 h-20 w-10 rounded-xl border-2 border-[#2c3d66]" />}
      {state === "active" && <span className="absolute top-2 left-2 h-20 w-[72px] rounded-xl border-2 border-[#31416a] bg-[#223259]" />}
      <span className="relative">{icon}</span>
      {state === "active" && <span className="absolute bottom-[10px] left-7 h-[6px] w-8 rounded-full bg-[#60cdff]" />}
      {state === "open" && <span className="absolute bottom-[10px] h-[6px] w-3 rounded-full bg-[#99a0b5]" />}
    </button>
  );
}

function Taskbar() {
  return (
    <footer className="flex h-24 items-center bg-[#10244d] font-['Open_Sans',sans-serif] text-white">
      <button aria-label="Widgets" className="ml-8 shrink-0">
        <Svg w={48} h={44} vb="0 0 48 44"><rect width="48" height="44" rx="3" fill="url(#widget)" /><rect x="4" y="4" width="18" height="36" rx="2" fill="#f5f5f7" /><path fill="#69d9ff" d="M26 4h18v20H26z" /><path fill="#1ea4ff" d="M26 24h18v8H26z" /><path fill="#0a84f0" d="M26 32h18v8H26z" /></Svg>
      </button>
      <nav aria-label="Apps" className="ml-[358px] flex">
        {apps.map(([label, icon, state]) => <AppButton key={label} label={label} icon={icon} state={state} />)}
      </nav>
      <div className="ml-auto flex items-center pr-10">
        <button aria-label="Show hidden icons" className="mr-[34px]"><Svg w={28} h={16} vb="0 0 28 16"><path d="M1.500 14.500L14 2l12.500 12.500" stroke="#fff" strokeWidth="2" /></Svg></button>
        <button aria-label="OneDrive" className="mr-[30px]">
          <Svg w={34} h={30} vb="0 0 34 30"><path fill="#8d95a8" d="M8 8q3-7 10-7t9 8v5H8z" /><path fill="#c9cdd8" d="M8 23a8 8 0 0 1 0-16q5 0 7 4t4 3v9z" /><circle cx="24" cy="20" r="9.500" fill="#5bc8ff" /><path d="M24 13v3M24 18v7" stroke="#111" strokeWidth="2.500" /></Svg>
        </button>
        <button aria-label="Updates" className="mr-[30px]">
          <Svg w={34} h={34} vb="0 0 34 34"><path d="M2 17A14 14 0 0 1 29 10M30 1v9h-9M3 33v-9h9M3.500 25Q8 31 16 32" stroke="#fff" strokeWidth="2" /><circle cx="24" cy="25" r="8" fill="#f00" /></Svg>
        </button>
        <button aria-label="Network and volume" className="mr-[30px] flex items-center gap-4">
          <Svg w={32} h={24} vb="0 0 32 24"><path d="M1 9.500a21 21 0 0 1 30 0M6 14a14 14 0 0 1 20 0M11 18.500a7.500 7.500 0 0 1 10 0" stroke="#fff" strokeWidth="2.200" /><circle cx="16" cy="21.500" r="2.500" fill="#fff" /></Svg>
          <Svg w={34} h={28} vb="0 0 34 28"><path d="M1.500 9.500h5L14 3v22l-7.500-6.500h-5zM18 10q3 4 0 8M22 6q6 8 0 16M26 2q9 12 0 24" stroke="#fff" strokeWidth="2" strokeLinejoin="round" /></Svg>
        </button>
        <button className="mr-5 text-right text-[22px] leading-8"><time dateTime="2025-07-21T10:27"><span className="block">10:27 AM</span><span className="block">7/21/2025</span></time></button>
        <button aria-label="Focus"><Svg w={28} h={28} vb="0 0 28 28"><path d="M13 1.500a12.500 12.500 0 1 1-11.500 19C10 19 15 12 13 1.500z" stroke="#fff" strokeWidth="2" strokeLinejoin="round" /></Svg></button>
      </div>
    </footer>
  );
}

export default function App() {
  return (
    <div className="flex min-h-screen flex-col bg-white font-['Open_Sans',sans-serif]">
      <Gradients />
      <TabStrip />
      <Toolbar />
      <Page />
      <Taskbar />
    </div>
  );
}
